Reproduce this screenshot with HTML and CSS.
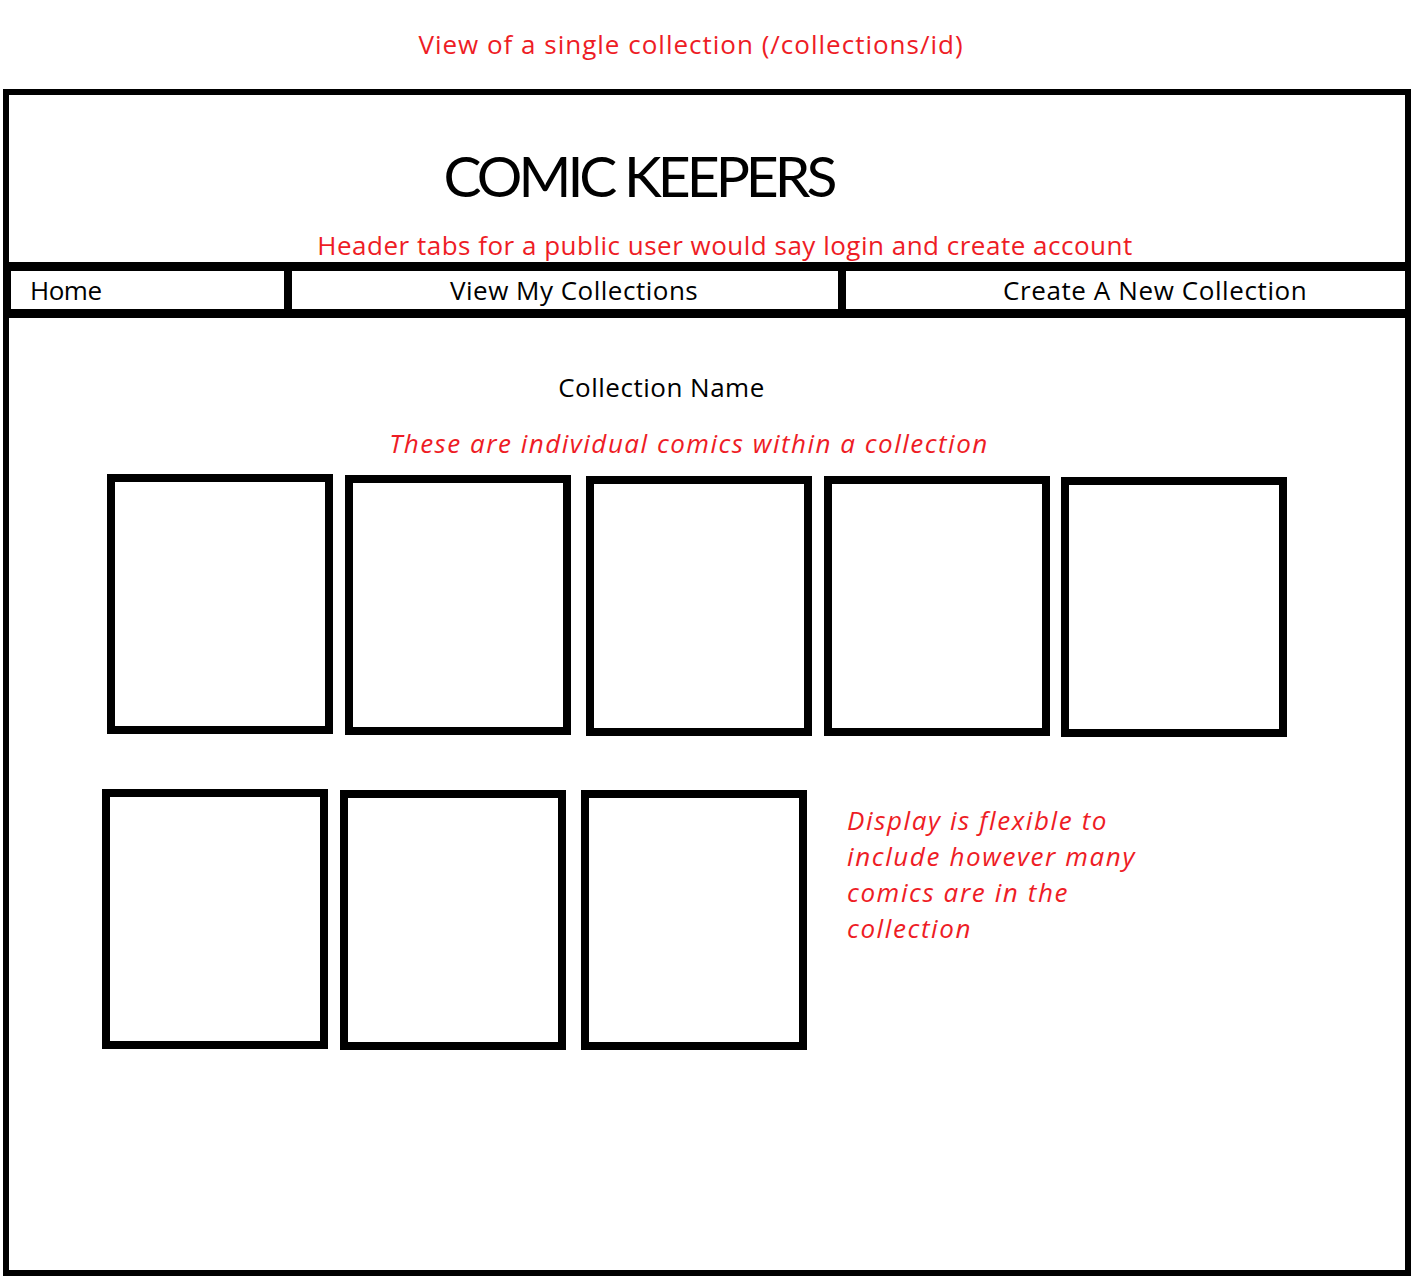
FILE: index.html
```html
<!DOCTYPE html>
<html lang="en">
<head>
<meta charset="utf-8">
<title>Comic Keepers – Collection view wireframe</title>
<link rel="stylesheet" href="styles.css">
</head>
<body>
  <p class="caption">View of a single collection (/collections/id)</p>
  <div class="frame">
    <header class="header">
      <h1 class="title">COMIC KEEPERS</h1>
      <p class="note note-header">Header tabs for a public user would say login and create account</p>
    </header>
    <nav class="tabs">
      <div class="tab tab-home">Home</div>
      <div class="tab tab-view">View My Collections</div>
      <div class="tab tab-create">Create A New Collection</div>
    </nav>
    <main class="content">
      <h2 class="collection-name">Collection Name</h2>
      <p class="note note-comics">These are individual comics within a collection</p>
      <div class="row row-1">
        <div class="comic"></div>
        <div class="comic"></div>
        <div class="comic"></div>
        <div class="comic"></div>
        <div class="comic"></div>
      </div>
      <div class="row row-2">
        <div class="comic"></div>
        <div class="comic"></div>
        <div class="comic"></div>
        <p class="note note-flex">Display is flexible to<br>include however many<br>comics are in the<br>collection</p>
      </div>
    </main>
  </div>
</body>
</html>
```
FILE: styles.css
```css
html, body {
  margin: 0;
  padding: 0;
  background: #fff;
}

body {
  font-family: "Open Sans", Lato, "DejaVu Sans", sans-serif;
  color: #000;
  overflow: hidden;
  width: 1412px;
  height: 1276px;
}

.caption {
  margin: 0;
  padding: 28px 30px 0 0;
  text-align: center;
  font-size: 26px;
  line-height: 32px;
  letter-spacing: 1px;
  color: #ee1c25;
}

.frame {
  margin: 29px 1px 0 3px;
  border: 6px solid #000;
  height: 1175px;
  display: flex;
  flex-direction: column;
}

.header {
  height: 167px;
  display: flex;
  flex-direction: column;
}

.title {
  margin: 45px 0 0 0;
  padding-right: 137px;
  text-align: center;
  font-family: Lato, "Open Sans", sans-serif;
  font-size: 57px;
  line-height: 70px;
  font-weight: 400;
  letter-spacing: -4px;
}

.note {
  margin: 0;
  color: #ee1c25;
  font-size: 26px;
  line-height: 32px;
}

.note-header {
  margin-top: 19px;
  padding-left: 36px;
  text-align: center;
  letter-spacing: 0.5px;
}

.tabs {
  background: #000;
  display: flex;
  gap: 8px;
  padding: 9px 0 9px 2px;
}

.tab {
  background: #fff;
  height: 38px;
  display: flex;
  align-items: center;
  font-size: 26px;
  line-height: 32px;
  white-space: nowrap;
}

.tab-home {
  width: 254px;
  padding-left: 19px;
  letter-spacing: -0.5px;
}

.tab-view {
  width: 388px;
  padding-left: 158px;
  letter-spacing: 0.5px;
}

.tab-create {
  flex: 1;
  padding-left: 157px;
  letter-spacing: 0.6px;
}

.content {
  flex: 1;
  padding-top: 53px;
}

.collection-name {
  margin: 0;
  padding-right: 91px;
  text-align: center;
  font-size: 26px;
  line-height: 32px;
  font-weight: 400;
  letter-spacing: 0.5px;
}

.note-comics {
  margin-top: 24px;
  padding-right: 36px;
  text-align: center;
  font-style: italic;
  letter-spacing: 1.5px;
}

.row {
  display: flex;
  align-items: flex-start;
  gap: 12px;
}

.row-1 {
  margin-top: 15px;
  padding-left: 98px;
}

.row-2 {
  margin-top: 52px;
  padding-left: 93px;
}

.comic {
  width: 226px;
  height: 260px;
  box-sizing: border-box;
  border: 8px solid #000;
  flex: none;
}

.row-1 .comic:nth-child(2) { margin-top: 1px; }
.row-1 .comic:nth-child(3) { margin-top: 2px; margin-left: 3px; }
.row-1 .comic:nth-child(4) { margin-top: 2px; }
.row-1 .comic:nth-child(5) { margin-top: 3px; margin-left: -1px; }

.row-2 .comic:nth-child(2) { margin-top: 1px; }
.row-2 .comic:nth-child(3) { margin-top: 1px; margin-left: 3px; }

.note-flex {
  margin: 13px 0 0 28px;
  font-style: italic;
  line-height: 36px;
  letter-spacing: 1.6px;
  white-space: nowrap;
}
```
